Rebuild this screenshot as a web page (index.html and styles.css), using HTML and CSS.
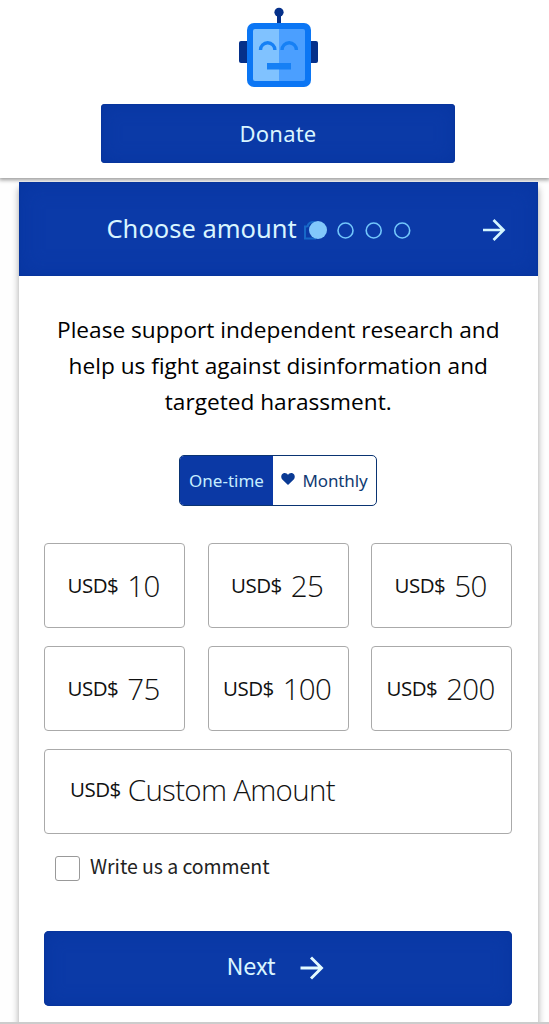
FILE: index.html
```html
<!DOCTYPE html>
<html lang="en">
<head>
<meta charset="utf-8">
<title>Donate</title>
<link rel="stylesheet" href="styles.css">
</head>
<body>
<header class="top">
  <svg class="robot" width="82" height="82" viewBox="0 0 82 82">
    <path d="M41 9v10" stroke="#05308a" stroke-width="4"/>
    <circle cx="41" cy="7.300" r="4.600" fill="#05308a"/>
    <rect x="1" y="36" width="12" height="22" rx="2" fill="#05308a"/>
    <rect x="68" y="36" width="12" height="22" rx="2" fill="#05308a"/>
    <rect x="9" y="18" width="64" height="64" rx="7" fill="#0b76f4"/>
    <path d="M17 24h24v52H17a2 2 0 0 1-2-2V26a2 2 0 0 1 2-2z" fill="#80c2ff"/>
    <path d="M41 24h24a2 2 0 0 1 2 2v48a2 2 0 0 1-2 2H41z" fill="#4b9fff"/>
    <path d="M22.500 45a7.200 7.200 0 0 1 14.400 0M44 45a7.200 7.200 0 0 1 14.400 0" fill="none" stroke="#1680f5" stroke-width="3.400"/>
    <rect x="29" y="58" width="24" height="6.500" fill="#1680f5"/>
  </svg>
  <button class="btn donate"><span>Donate</span></button>
</header>
<main class="card">
  <div class="steps">
    <h1 class="steps-title">Choose amount</h1>
    <svg class="dots" width="110" height="24" viewBox="0 0 110 24">
      <path d="M4.500 8.500H2v12h11M4.500 9a5 5 0 0 1 8-4" fill="none" stroke="#1768c7" stroke-width="2"/>
      <circle cx="15" cy="12" r="9" fill="#82c8fb"/>
      <g fill="none" stroke="#72c6fb" stroke-width="1.600">
        <circle cx="42.500" cy="12.500" r="7.500"/>
        <circle cx="70.700" cy="12.500" r="7.500"/>
        <circle cx="99.200" cy="12.500" r="7.500"/>
      </g>
    </svg>
    <svg class="arrow" width="24" height="24" viewBox="0 0 24 24"><path d="M1 12h20M11.500 2l10 10-10 10" fill="none" stroke="#d4f6ff" stroke-width="2.700"/></svg>
  </div>
  <section class="content">
    <p class="intro">Please support independent research and<br>help us fight against disinformation and<br>targeted harassment.</p>
    <div class="toggle">
      <span class="once">One-time</span>
      <span class="monthly"><svg width="14" height="12" viewBox="0 0 14 12"><path d="M7 12L1.300 6.500C-.5 4.500.1 1.500 2.100.5 4-.4 6 .3 7 2 8 .3 10-.4 11.900.5c2 1 2.600 4 .8 6z" fill="#0a3a94"/></svg><span>Monthly</span></span>
    </div>
    <div class="amounts">
      <div class="amount"><span class="cur">USD$</span><span class="num">10</span></div>
      <div class="amount"><span class="cur">USD$</span><span class="num">25</span></div>
      <div class="amount"><span class="cur">USD$</span><span class="num">50</span></div>
      <div class="amount"><span class="cur">USD$</span><span class="num">75</span></div>
      <div class="amount"><span class="cur">USD$</span><span class="num">100</span></div>
      <div class="amount"><span class="cur">USD$</span><span class="num">200</span></div>
      <div class="amount custom"><span class="cur">USD$</span><span class="num">Custom Amount</span></div>
    </div>
    <label class="comment"><span class="box"></span><span class="label">Write us a comment</span></label>
    <button class="btn next"><span class="label">Next</span><svg width="24" height="24" viewBox="0 0 24 24"><path d="M0.500 12h21M11 1.500l10.500 10.500-10.500 10.500" fill="none" stroke="#e4fbff" stroke-width="2.900"/></svg></button>
  </section>
</main>
<footer class="edge"></footer>
</body>
</html>
```
FILE: styles.css
```css
* { box-sizing: border-box; }
body {
  margin: 0;
  height: 1024px;
  overflow: hidden;
  display: flex;
  flex-direction: column;
  background: #fefefe;
  font-family: "Open Sans", "Noto Sans", sans-serif;
  color: #000;
}
.top {
  height: 178px;
  flex: none;
  padding: 5px 0 0 8px;
  display: flex;
  flex-direction: column;
  align-items: center;
  gap: 17px;
  background: #fff;
  box-shadow: 0 1px 4px 1px #999;
}
.robot { display: block; flex: none; }
.btn {
  border: 0;
  padding: 0;
  display: flex;
  justify-content: center;
  align-items: center;
  font-family: "Noto Sans", sans-serif;
  color: #d9f5ff;
  background: #0b3aa7;
  box-shadow: inset 0 0 18px #0735a0, inset 0 0 2px #062b76;
}
.donate {
  width: 354px;
  height: 59px;
  padding-bottom: 2px;
  margin-right: 1px;
  border-radius: 4px;
  font-size: 22px;
  letter-spacing: .2px;
}
.card {
  width: 519px;
  height: 846px;
  flex: none;
  margin: 4px 0 0 18.500px;
  box-shadow: 0 6px 7px rgba(0, 0, 0, .36);
  background: #fff;
}
.steps {
  width: 519px;
  height: 94px;
  padding: 0 32px 0 88px;
  display: flex;
  align-items: center;
  color: #d9f5ff;
  background: #0b3aa8;
  box-shadow: inset 0 0 22px #0735a0, inset 0 0 2px #062b76;
}
.steps-title {
  margin: 0;
  padding-bottom: 2px;
  width: 196.500px;
  font: 400 25.500px/34px "Noto Sans", sans-serif;
  white-space: nowrap;
}
.dots { margin-top: 1px; }
.arrow { margin: 2px 0 0 auto; }
.content { padding: 36px 25px 0 25.500px; }
.intro {
  margin: 0;
  text-align: center;
  white-space: nowrap;
  font-size: 22.650px;
  line-height: 36px;
}
.toggle {
  width: 198px;
  height: 51px;
  margin: 35px auto 0 135px;
  display: flex;
  border: 1px solid #0a3472;
  border-radius: 5px;
  overflow: hidden;
  font: 17px/24px "Noto Sans", sans-serif;
}
.once, .monthly { display: flex; align-items: center; justify-content: center; }
.once { width: 93px; background: #0b39a5; color: #c6edff; }
.monthly { flex: 1; gap: 7px; color: #103a72; letter-spacing: -.1px; }
.monthly svg { margin-bottom: 3px; }
.amounts {
  width: 468px;
  margin-top: 36.500px;
  display: grid;
  grid-template-columns: repeat(3, 141px);
  grid-auto-rows: 85px;
  justify-content: space-between;
  row-gap: 18.400px;
}
.amount {
  display: flex;
  align-items: center;
  justify-content: center;
  gap: 9px;
  padding: 1px 2px 0 0;
  border: 1px solid #aaa;
  border-radius: 4px;
  color: #111;
}
.cur { font-size: 20.500px; letter-spacing: -.5px; line-height: 44px; padding-bottom: 2px; }
.num { font-size: 29.500px; letter-spacing: -.8px; font-weight: 300; line-height: 44px; }
.custom { grid-column: 1 / 4; justify-content: flex-start; padding: 0 0 3px 25px; gap: 7px; }
.custom .num { letter-spacing: -.7px; }
.comment {
  height: 25px;
  margin: 22px 0 0 11px;
  display: flex;
  align-items: center;
  gap: 10px;
  font: 19.500px/24px "Noto Sans CJK SC", sans-serif;
  letter-spacing: -.05px;
  color: #222;
}
.comment .label { padding-bottom: 6px; }
.box { width: 25px; height: 25px; border: 1px solid #999; border-radius: 3px; }
.next {
  width: 468px;
  height: 75px;
  margin-top: 50px;
  padding-right: 5px;
  gap: 25px;
  border-radius: 5px;
  font: 23.500px/34px "Noto Sans CJK SC", sans-serif;
}
.next .label { padding-bottom: 8px; letter-spacing: -.2px; }
.next svg { margin-bottom: 1px; }
.edge {
  height: 2px;
  flex: none;
  margin-top: -6px;
  position: relative;
  background: #ccc;
}
```
